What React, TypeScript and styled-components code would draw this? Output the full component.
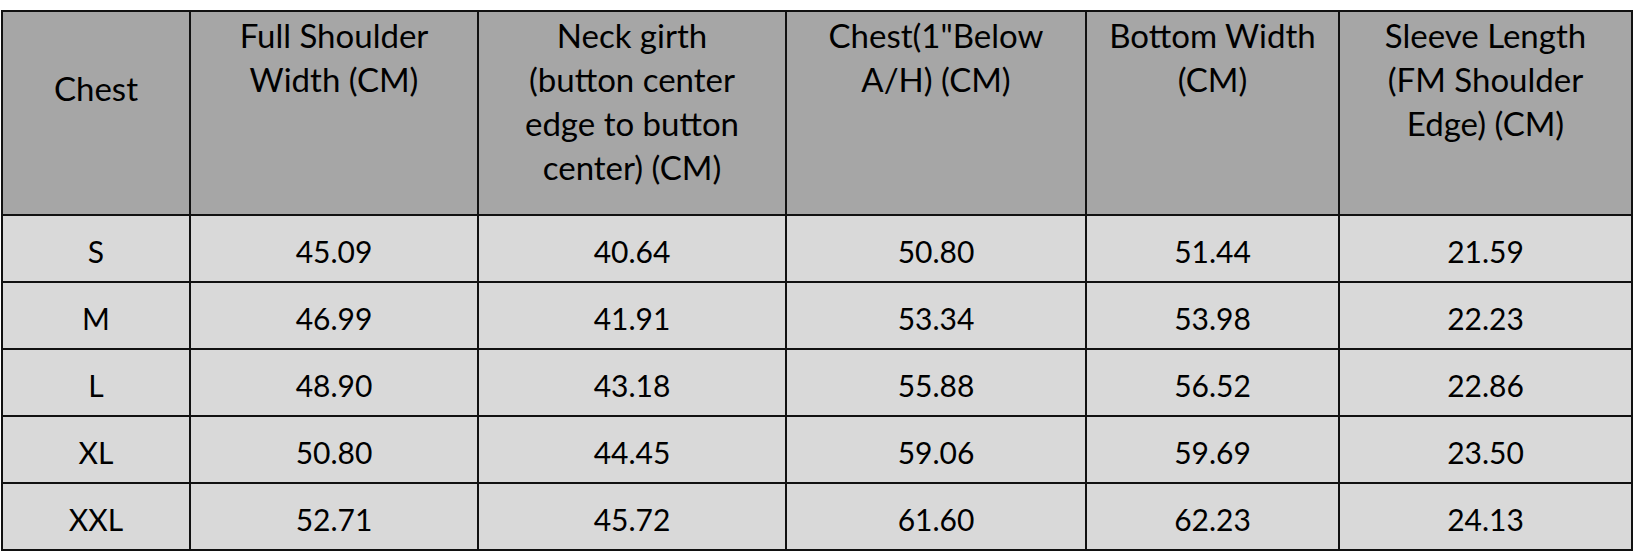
import React from "react";
import styled, { createGlobalStyle } from "styled-components";

const GlobalStyle = createGlobalStyle`
  html, body {
    margin: 0;
    padding: 0;
    background: #ffffff;
  }
`;

const Page = styled.div`
  padding: 10px 0 0 1px;
  font-family: Lato, "Open Sans", sans-serif;
  color: #000000;
`;

const Table = styled.table`
  border-collapse: collapse;
  width: 1630px;
  table-layout: fixed;
`;

const HeadCell = styled.th<{ $offset?: number }>`
  background: #a6a6a6;
  border: 2px solid #111111;
  font-weight: 400;
  font-size: 33px;
  line-height: 44px;
  text-align: center;
  vertical-align: top;
  height: 200px;
  padding: ${({ $offset }) => $offset || 1}px 4px 0;
  box-sizing: border-box;
`;

const HeadRow = styled.tr`
  height: 204px;
`;

const BodyRow = styled.tr`
  height: 67px;
`;

const Cell = styled.td`
  background: #d9d9d9;
  border: 2px solid #111111;
  font-size: 30px;
  text-align: center;
  vertical-align: middle;
  padding: 4px 0 0;
`;

const columns: { width: number; label: string[]; offset?: number }[] = [
  { width: 188, label: ["Chest"], offset: 54 },
  { width: 288, label: ["Full Shoulder", "Width (CM)"] },
  {
    width: 308,
    label: ["Neck girth", "(button center", "edge to button", "center) (CM)"],
  },
  { width: 300, label: ["Chest(1\"Below", "A/H) (CM)"] },
  { width: 253, label: ["Bottom Width", "(CM)"] },
  { width: 293, label: ["Sleeve Length", "(FM Shoulder", "Edge) (CM)"] },
];

const rows = [
  ["S", "45.09", "40.64", "50.80", "51.44", "21.59"],
  ["M", "46.99", "41.91", "53.34", "53.98", "22.23"],
  ["L", "48.90", "43.18", "55.88", "56.52", "22.86"],
  ["XL", "50.80", "44.45", "59.06", "59.69", "23.50"],
  ["XXL", "52.71", "45.72", "61.60", "62.23", "24.13"],
];

export default function App() {
  return (
    <>
      <GlobalStyle />
      <Page>
        <Table>
          <colgroup>
            {columns.map((col, i) => (
              <col key={i} style={{ width: col.width }} />
            ))}
          </colgroup>
          <thead>
            <HeadRow>
              {columns.map((col, i) => (
                <HeadCell key={i} $offset={col.offset}>
                  {col.label.map((line, j) => (
                    <React.Fragment key={j}>
                      {j > 0 && <br />}
                      {line}
                    </React.Fragment>
                  ))}
                </HeadCell>
              ))}
            </HeadRow>
          </thead>
          <tbody>
            {rows.map((row, i) => (
              <BodyRow key={i}>
                {row.map((value, j) => (
                  <Cell key={j}>{value}</Cell>
                ))}
              </BodyRow>
            ))}
          </tbody>
        </Table>
      </Page>
    </>
  );
}
